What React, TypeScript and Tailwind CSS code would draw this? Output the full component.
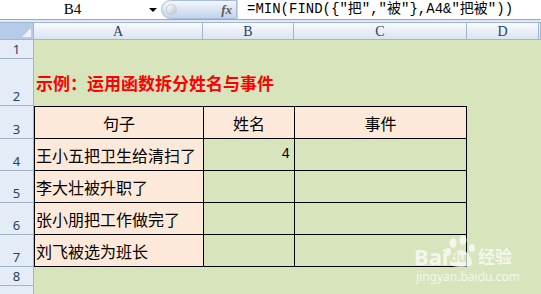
import React from "react";

const rowH = [19, 47, 33, 32, 32, 32, 32, 19];

function RowHead({ n, h }: { n: number; h: number }) {
  return (
    <div
      className="bg-[#e4ecf7] border-r border-b border-[#9eb6ce] flex items-end justify-center pb-[1px] text-[13px] leading-[16px] text-[#27415f]"
      style={{ height: h }}
    >
      {n}
    </div>
  );
}

export default function App() {
  const cjk = { fontFamily: '"Noto Sans CJK SC", "Noto Sans", sans-serif' };
  const mono = { fontFamily: '"Liberation Mono", "Noto Sans CJK SC", monospace' };
  const serif = { fontFamily: '"Liberation Serif", serif' };
  const sentences = ["王小五把卫生给清扫了", "李大壮被升职了", "张小朋把工作做完了", "刘飞被选为班长"];
  const formula = '=MIN(FIND({"把","被"},A4&"把被"))';
  return (
    <div className="relative w-[541px] h-[294px] overflow-hidden bg-[#d8e4bc] flex flex-col">
      {/* formula bar */}
      <div className="h-[20px] shrink-0 flex bg-white border-b border-[#8faacd]">
        <div className="w-[145px] flex items-center justify-center text-[15px] text-black" style={serif}>
          B4
        </div>
        <div className="w-[16px] flex items-center justify-center">
          <div className="w-0 h-0 border-l-[4px] border-r-[4px] border-t-[4px] border-l-transparent border-r-transparent border-t-black" />
        </div>
        <div className="w-[76px] h-[19px] rounded-l-full bg-gradient-to-b from-[#f3f7fc] via-[#d9e4f3] to-[#c3d3ea] border border-[#a9bcd8] flex items-center justify-between pl-[4px] pr-[4px]">
          <div className="w-[11px] h-[11px] rounded-full bg-gradient-to-br from-white to-[#b9c2cf] border border-[#c5ccd6]" />
          <span className="italic font-bold text-[13px] text-[#5a5a5a]" style={serif}>
            fx
          </span>
        </div>
        <div className="flex-1 border-l border-[#c9d5e6] flex items-center pl-[9px] text-[14px] text-black whitespace-nowrap" style={mono}>
          {formula}
        </div>
      </div>
      <div className="h-[3px] shrink-0 bg-[#dfe8f4] border-b border-[#9eb6ce]" />
      {/* sheet */}
      <div className="grid grid-cols-[34px_169px_91px_173px_72px_1fr]">
        {/* column headers */}
        <div className="h-[17px] bg-[#b6cbe8] border-r border-b border-[#9eb6ce] relative">
          <div className="absolute right-[2px] bottom-[2px] w-0 h-0" style={{ borderBottom: "9px solid #eef3fa", borderLeft: "9px solid transparent" }} />
        </div>
        {["A", "B", "C", "D", ""].map((c, i) => (
          <div
            key={i}
            className="h-[17px] bg-gradient-to-b from-[#f8fafd] to-[#dbe4f1] border-r border-b border-[#9eb6ce] flex items-center justify-center text-[14px] text-[#27415f]"
            style={serif}
          >
            {c}
          </div>
        ))}

        {/* row 1 */}
        <RowHead n={1} h={rowH[0]} />
        <div className="col-span-5" />

        {/* row 2 */}
        <RowHead n={2} h={rowH[1]} />
        <div className="col-span-5 flex items-center pl-[2px] pt-[1px] text-[17px] font-bold text-[#ff0000] whitespace-nowrap" style={cjk}>
          示例：运用函数拆分姓名与事件
        </div>

        {/* row 3 */}
        <RowHead n={3} h={rowH[2]} />
        <div className="bg-[#fde9d9] border border-black border-r-0 flex items-center justify-center text-[16px] text-black" style={cjk}>
          句子
        </div>
        <div className="bg-[#fde9d9] border-t border-l border-b border-black flex items-center justify-center text-[16px] text-black" style={cjk}>
          姓名
        </div>
        <div className="bg-[#fde9d9] border border-black flex items-center justify-center text-[16px] text-black" style={cjk}>
          事件
        </div>
        <div className="col-span-2" />

        {sentences.map((s, i) => (
          <React.Fragment key={i}>
            <RowHead n={i + 4} h={rowH[i + 3]} />
            <div className="bg-[#fde9d9] border-l border-b border-black flex items-center pl-[1px] text-[16px] text-black whitespace-nowrap" style={cjk}>
              {s}
            </div>
            <div className="border-l border-b border-black flex items-center justify-end pr-[4px] text-[14px] text-black" style={mono}>
              {i === 0 ? "4" : ""}
            </div>
            <div className="border-l border-r border-b border-black" />
            <div className="col-span-2" />
          </React.Fragment>
        ))}

        {/* row 8 */}
        <RowHead n={8} h={rowH[7]} />
        <div className="col-span-5" />
        <div className="h-[20px] bg-[#e4ecf7] border-r border-[#9eb6ce]" />
        <div className="col-span-5" />
      </div>

      {/* watermark */}
      <div className="absolute left-[414px] top-[234px] w-[110px] h-[52px] text-white opacity-70 pointer-events-none">
        <svg className="absolute left-[30px] top-[0px]" width="34" height="34" viewBox="0 0 34 34">
          <ellipse cx="9" cy="9" rx="3.5" ry="5" fill="white" />
          <ellipse cx="19" cy="6" rx="3.5" ry="5" fill="white" />
          <ellipse cx="4" cy="18" rx="3" ry="4" fill="white" />
          <ellipse cx="28" cy="14" rx="3" ry="4" fill="white" />
          <path d="M6 30 C6 22 12 16 17 16 C22 16 28 22 28 30 C28 34 6 34 6 30 Z" fill="white" />
        </svg>
        <span className="absolute left-[0px] top-[10px] text-[22px] font-bold leading-[24px]" style={{ fontFamily: '"Noto Sans", sans-serif' }}>
          Bai
        </span>
        <span className="absolute left-[36px] top-[16px] text-[13px] font-bold leading-[14px] text-[#d8e4bc]" style={{ fontFamily: '"Noto Sans", sans-serif' }}>
          du
        </span>
        <span className="absolute left-[64px] top-[12px] text-[17px] font-bold leading-[20px]" style={cjk}>
          经验
        </span>
        <span className="absolute left-[2px] top-[36px] text-[12px] leading-[14px]" style={{ fontFamily: '"Noto Sans", sans-serif' }}>
          jingyan.baidu.com
        </span>
      </div>
    </div>
  );
}
